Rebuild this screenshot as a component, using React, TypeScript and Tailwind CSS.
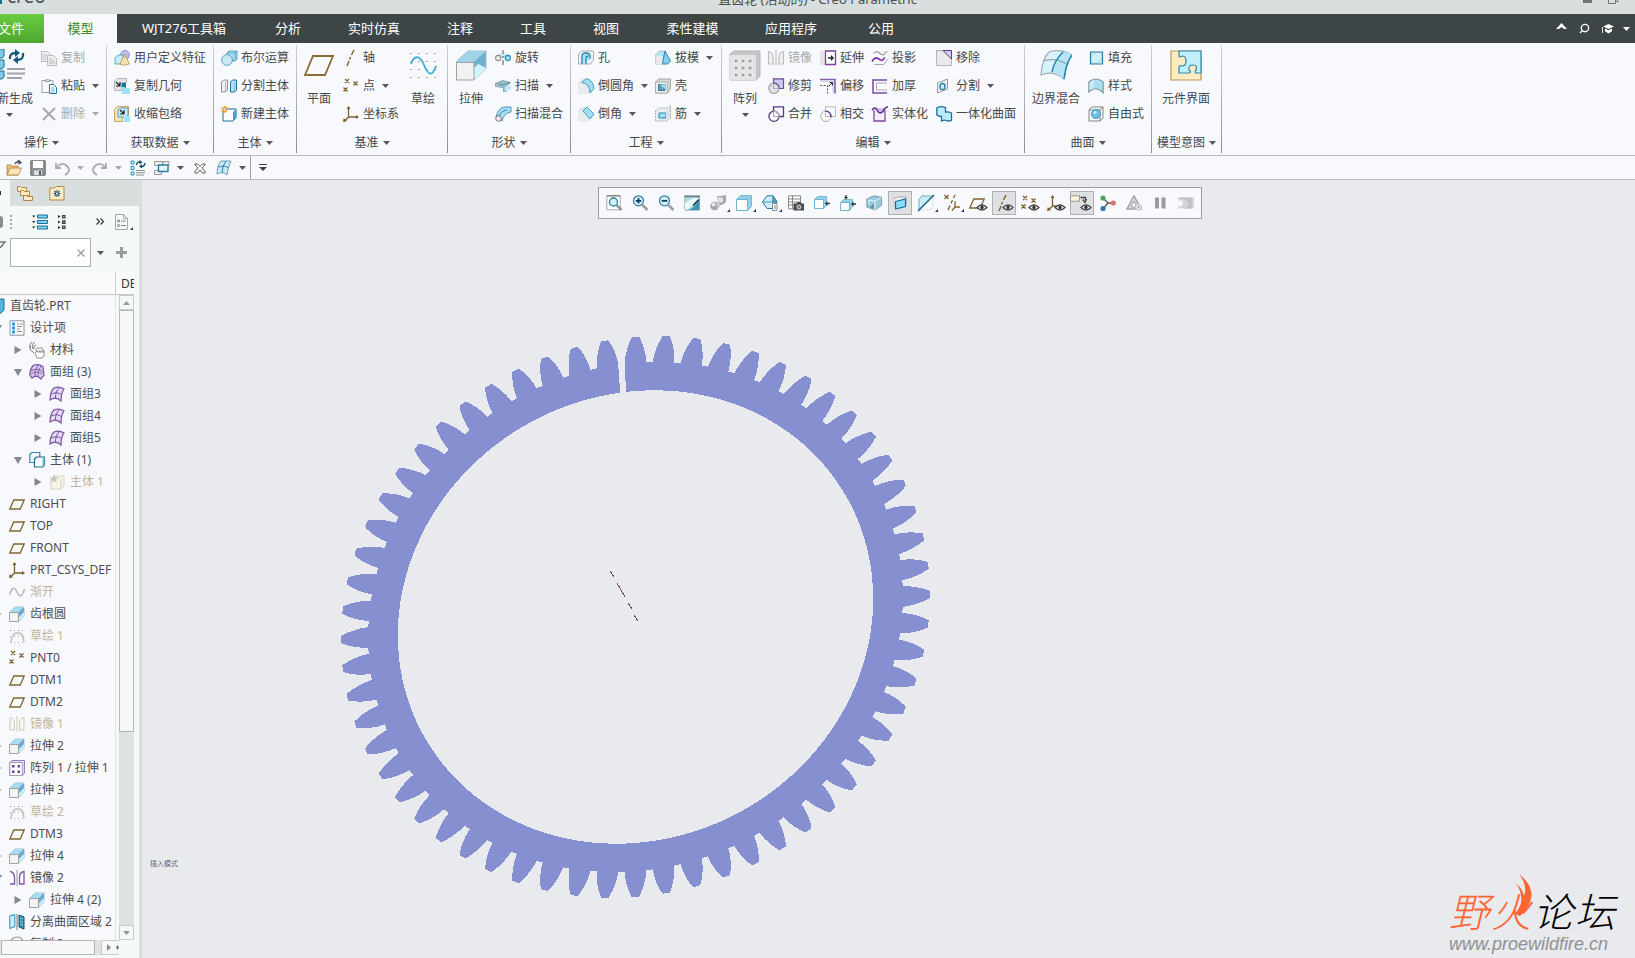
import React from 'react';
import { Search } from 'lucide-react';

const ICONS: Record<string, React.ReactNode> = {
  extrude: (
    <>
      <path d="M1 6L6 1h9v9l-5 5z" fill="#79b8d4" stroke="#8fb4c4" strokeWidth=".8" />
      <path d="M1 6L6 1h9l-5 5z" fill="#a9dcf0" />
      <path d="M10 15v-5l5-5v5z" fill="#c9effc" />
      <path d="M10 6l5-5v5l-5 5z" fill="#6cacc9" />
      <path d="M.5 6.500h9v9h-9z" fill="#f3f3f3" stroke="#a2a4a6" />
    </>
  ),
  copy: (
    <g fill="#eeefef" stroke="#b9bbbc">
      <path d="M.5 1.500h6l3 3v7h-9z" />
      <path d="M2 5h4M2 7h3M2 9h3" />
      <path d="M6.500 5.500h6l3 3v7h-9z" />
      <path d="M8 9h3M8 11h6M8 13h6" />
    </g>
  ),
  paste: (
    <>
      <path d="M1 2.500h11v12H1z" fill="#fbfbfb" stroke="#a0a3a5" />
      <path d="M4 3.500V2h1.500q1-2 2 0H9v1.500z" fill="#ddd" stroke="#8b8e90" strokeWidth=".8" />
      <path d="M8.500 6.500h4l3 3v6h-7z" fill="#fff" stroke="#20799f" />
      <path d="M10 10h3M10 12h4M10 14h4" stroke="#3aa4d0" strokeWidth=".8" />
    </>
  ),
  del: <path d="M2 2l12 12M14 2L2 14" stroke="#a9abac" strokeWidth="2.200" fill="none" />,
  udf: (
    <>
      <circle cx="11" cy="5" r="4.500" fill="#b9bdf0" stroke="#7f86c4" strokeWidth=".8" />
      <path d="M1 8l3-3h5v6l-2 3H1z" fill="#c9ecf9" stroke="#4a9cc0" strokeWidth=".8" />
      <path d="M10.500 4.500L6 14q4.500 2.500 9.500 0z" fill="#f5dfae" stroke="#b98f49" strokeWidth=".8" />
    </>
  ),
  copyGeom: (
    <>
      <path d="M.5 3l3-2.500h9v4h-5v8h-7z" fill="#e4e5e6" stroke="#a5a7a9" strokeWidth=".8" />
      <path d="M2 4l4 4M6 4v4H2" stroke="#222" strokeWidth="1.200" fill="none" />
      <path d="M8 5h4v5H8z" fill="#16789f" />
      <path d="M8 9h3v1h5v6H8z" fill="#9de1fb" />
    </>
  ),
  shrink: (
    <>
      <path d="M.5 3.500l3-3h11v9h-6v6h-8z" fill="#f5e2b6" stroke="#b8924f" strokeWidth=".8" />
      <path d="M4 4l2-2h8v7l-2 2H4z" fill="#c8ecfa" stroke="#3b8db1" strokeWidth=".8" />
      <path d="M6 4l4 4M10 4v4H6" stroke="#222" strokeWidth="1.200" fill="none" />
      <path d="M10 10h6v6h-6z" fill="#9de1fb" />
    </>
  ),
  boolean: (
    <>
      <path d="M6 3l2-2h8v8l-2 2H6z" fill="#a6dcf2" stroke="#3f93b8" strokeWidth=".8" />
      <path d="M6 3h8v8M14 3l2-2" stroke="#3f93b8" strokeWidth=".6" fill="none" />
      <circle cx="6" cy="10" r="5.400" fill="#c8e8f4" stroke="#3f93b8" strokeWidth=".8" />
    </>
  ),
  splitBody: (
    <>
      <path d="M.5 4l2-2h4v10l-2 2h-4z" fill="#eef0f1" stroke="#8b9092" />
      <path d="M9.500 4l2-2h4v10l-2 2h-4z" fill="#b2e5f9" stroke="#1a6f95" />
      <path d="M4.500 4v10M13.500 4v10" stroke="#6b98ab" strokeWidth=".6" />
    </>
  ),
  newBody: (
    <>
      <path d="M2 6l3-3h10v9l-3 3H2z" fill="#fff" stroke="#1a6f95" />
      <path d="M12 6l3-3v9l-3 3z" fill="#4aa3c8" />
      <path d="M3.500 0v7M0 3.500h7M1 1l5 5M6 1L1 6" stroke="#e99a2b" strokeWidth="1.200" />
      <circle cx="3.500" cy="3.500" r="1" fill="#fff" />
    </>
  ),
  axis: <path d="M11 0L8.500 5M7.500 7L6.500 9.500M6 11L4 16" stroke="#7d6128" strokeWidth="1.400" fill="none" />,
  points: (
    <path
      d="M2 1l4 4M6 1L2 5M10.500 3.500l4 4M14.500 3.500l-4 4M.5 9.500l4 4M4.500 9.500l-4 4"
      stroke="#7d6128"
      strokeWidth="1.300"
      fill="none"
    />
  ),
  csys: (
    <>
      <path d="M5.500 1.500v9.500h9M5.500 11l-4 4" stroke="#7d5f28" strokeWidth="1.300" fill="none" />
      <path d="M5.500 0l2 3h-4zM16 11l-3-2v4zM0 16l.8-4 3.200 3.200z" fill="#7d5f28" />
    </>
  ),
  revolve: (
    <>
      <path d="M1 5q7-4 14 0l-1 3H2z" fill="#ccecf7" />
      <circle cx="3.200" cy="8" r="2.600" fill="#eee" stroke="#8d9092" strokeWidth="1.100" />
      <circle cx="12.800" cy="8" r="2.600" fill="#9edcf3" stroke="#2c8bb2" strokeWidth="1.100" />
      <path d="M8 0v4M8 6v2M8 10v5" stroke="#555" strokeWidth="1" />
    </>
  ),
  sweep: (
    <>
      <path d="M.5 5.500l7-3 8 2-4 3v6l-3 0V9.500l-8-1z" fill="#8ec4d6" stroke="#7f9299" strokeWidth=".8" />
      <path d="M.5 5.500l7 1.500 8-2.500" stroke="#678" strokeWidth=".8" fill="none" />
      <path d="M10 8.500l6-1v4l-6 2z" fill="#bde8f7" />
      <path d="M.5 5.500h3v4l-3-1z" fill="#b8babb" />
    </>
  ),
  sweptBlend: (
    <>
      <path d="M1 12Q2 3 9 1h7v5Q9 7 7 15z" fill="#a6dff4" stroke="#4a8aa6" strokeWidth=".9" />
      <path d="M4 11Q5 5 12 4" stroke="#2c7ea3" strokeWidth=".9" fill="none" />
      <circle cx="3.500" cy="12.500" r="2.800" fill="#eee" stroke="#777" />
    </>
  ),
  hole: (
    <>
      <path d="M.5 4l3-3h12v9l-3 4H.5z" fill="#eef0f1" stroke="#9a9d9f" strokeWidth=".8" />
      <path d="M4 14V6q0-3 4-3t4 3v3M8 14V8q0-2 2.500-2" stroke="#2589b5" strokeWidth="1.300" fill="#a8e2f8" />
    </>
  ),
  round: (
    <>
      <path d="M0 5h7q5 2 5 6v5H0z" fill="#e9eaeb" />
      <path d="M0 5l4-4h5L5 5z" fill="#dfe1e2" />
      <path d="M4 4.500L8 .5q7 1 8 10L12 15Q12 6 4 4.500z" fill="#9fdcf3" stroke="#3c95bb" strokeWidth=".9" />
    </>
  ),
  chamfer: (
    <>
      <path d="M0 5h6l6 6v5H0z" fill="#e9eaeb" />
      <path d="M0 5l4-4h6L6 5z" fill="#dfe1e2" />
      <path d="M5 5l4-4 7 7-4 5z" fill="#9fe0f8" stroke="#3c95bb" strokeWidth=".9" />
    </>
  ),
  draft: (
    <>
      <path d="M.5 5l4-4h6l-2 4v9h-8z" fill="#b6e4f4" stroke="#9ab6c0" strokeWidth=".8" />
      <path d="M.5 6h7v8h-7z" fill="#e9eaeb" />
      <path d="M10 1l5.500 10-3 3H7.500z" fill="#86d0ee" stroke="#2d86ad" />
    </>
  ),
  shell: (
    <>
      <path d="M.5 4l3-3h12v10l-3 4H.5z" fill="#d4d7d8" stroke="#999" strokeWidth=".8" />
      <path d="M.5 4h12v11H.5z" fill="#eceded" stroke="#a3a6a8" strokeWidth=".8" />
      <path d="M3.500 6.500h6.500v6H3.500z" fill="#5d9fbb" stroke="#3b7e9b" />
      <path d="M5 6.500h5V11z" fill="#a6e3fa" />
    </>
  ),
  rib: (
    <>
      <path d="M.5 5l3-3h8l4-2v12l-3 3H.5z" fill="#e6eef1" stroke="#999" strokeWidth=".8" strokeDasharray="2 1" />
      <path d="M4 7h7v5H4z" fill="#9fe0f8" stroke="#2d86ad" />
      <path d="M11 5l4-4v10l-4 3z" fill="#dfe1e2" />
    </>
  ),
  mirrorGrey: (
    <path
      d="M.5 1.500Q5 2 5 8v6H.5zM15.500 1.500Q11 2 11 8v6h4.500zM8 0v16"
      stroke="#b9bbbd"
      strokeWidth="1.100"
      fill="#f1f1f2"
    />
  ),
  mirrorTan: (
    <path d="M1 1.500Q5.500 2 5.500 8v6H1zM15 1.500Q10.500 2 10.500 8v6H15zM8 0v16" stroke="#cfc9bb" fill="#faf8f0" />
  ),
  mirrorPurple: (
    <>
      <path d="M1 1.500Q5.500 2 5.500 8v6H1M15 1.500Q10.500 2 10.500 8v6H15z" stroke="#8552a8" strokeWidth="1.300" fill="#fff" />
      <path d="M8 0v16" stroke="#999" />
    </>
  ),
  trim: (
    <>
      <path d="M5.500 .8h10v9.700h-10z" fill="#cbc9f2" stroke="#6a4d93" strokeWidth="1.200" />
      <circle cx="6" cy="10.300" r="5.200" fill="#dfe0e4" stroke="#999" strokeWidth="1.100" />
      <path d="M5.500 5V10.500h5.700" stroke="#b5a8c8" fill="none" />
      <path d="M5.500 5.100q5 0 5.700 5.400" stroke="#7a4fa2" strokeWidth="1.200" fill="none" />
    </>
  ),
  merge: (
    <>
      <path d="M5.500 5V.8h10v9.700h-4" fill="none" stroke="#573a7d" strokeWidth="1.300" />
      <circle cx="6" cy="10.300" r="5.100" fill="none" stroke="#573a7d" strokeWidth="1.300" />
      <path d="M5.500 5.500v5H11" stroke="#aaa" fill="none" />
      <path d="M6 5.200q5 .4 5.100 5" stroke="#bbb" strokeWidth="1.300" fill="none" />
    </>
  ),
  extend: (
    <>
      <path d="M0 1h6v14H0z" fill="#e3e4e5" />
      <path d="M5.500 1h10v13.500h-10z" fill="#fff" stroke="#7a3fa0" strokeWidth="1.300" />
      <path d="M8 8h4" stroke="#222" strokeWidth="1.500" />
      <path d="M11 5l3 3-3 3z" fill="#222" />
    </>
  ),
  offset: (
    <>
      <path d="M0 1.500h15v14" fill="none" stroke="#8461aa" strokeWidth="1.600" />
      <path d="M0 3.200h13.200v12" fill="none" stroke="#d9cfe8" strokeWidth="1.600" />
      <path d="M0 7.500h7.500v8" fill="none" stroke="#555" strokeDasharray="2 1.500" />
      <path d="M8.500 8.500l4-4M9.500 4.500h3v3" stroke="#333" fill="none" />
    </>
  ),
  intersect: (
    <>
      <path d="M5.500 .8h10v9.700h-10z" fill="none" stroke="#b8babc" />
      <circle cx="6" cy="10.300" r="5.200" fill="none" stroke="#a8aaac" />
      <path d="M5.500 5.100q5 0 5.700 6" stroke="#6b2f92" strokeWidth="1.400" fill="none" />
    </>
  ),
  project: (
    <>
      <path d="M1.500 3.500q3-3 5-1t5 2.500q1-3 4-3.500" fill="none" stroke="#9a9d9f" strokeWidth="1.100" />
      <path d="M0 11.500q3-5 6-3t4 2l3-3" fill="none" stroke="#7a2fa8" strokeWidth="1.700" />
      <path d="M2 14.500h10l3.500-5.500" fill="none" stroke="#aaa" />
    </>
  ),
  thicken: (
    <>
      <path d="M15 2H1v13h14" fill="none" stroke="#7a4aa0" strokeWidth="1.500" />
      <path d="M15 5H4.500v7H15" fill="none" stroke="#aaa" />
    </>
  ),
  solidify: (
    <>
      <path d="M2 4v11h11V4" fill="#f2eff8" stroke="#7a4aa0" strokeWidth="1.300" />
      <path d="M4 2h8v3q-3 4-6 1z" fill="#cdc1ec" />
      <path d="M0 4q3-4 5 0 3 6 7 0 1-3 4-3" fill="none" stroke="#652c8f" strokeWidth="1.600" />
    </>
  ),
  remove: (
    <>
      <path d="M.5 .5h15v15H.5z" fill="#e9eaeb" stroke="#b3b3b5" />
      <path d="M7 .5h8.500V9z" fill="#d5cdf5" stroke="#5e3a87" />
    </>
  ),
  splitSurf: (
    <>
      <path d="M1.500 5l10-4v10l-10 4z" fill="#eceded" stroke="#999" />
      <ellipse cx="6.500" cy="8.500" rx="2.500" ry="3.200" fill="#cdeffc" stroke="#1d7da5" strokeWidth="1.300" />
    </>
  ),
  unify: (
    <path
      d="M.8 2Q5-.5 9.500 1.500v4.500q3-.5 6 1v7.500q-3 1-5 0-2-1-5 .5V10.500q-3 0-4.700-1.500z"
      fill="#bdeafb"
      stroke="#1a6f95"
      strokeWidth="1.300"
    />
  ),
  fill: (
    <>
      <path d="M2.500 2h12v12h-12z" fill="#bfeafa" stroke="#2b7ba0" strokeWidth="1.200" />
      <path d="M4 9l5-5M4 12l8-8M7 12l6-6" stroke="#fff" />
    </>
  ),
  style: (
    <>
      <path d="M6 1.500Q11 .5 15.200 4v11Q11 10 6 10z" fill="#8fd3ec" />
      <path d="M.8 4Q8-2 15.200 4v11Q8 7 .8 14z" fill="#b5e6f7" fillOpacity=".7" stroke="#7f969f" strokeWidth="1.100" />
    </>
  ),
  freestyle: (
    <>
      <path d="M1 4l3-3h11v11l-3 3H1zM1 4h11v11M12 4l3-3" fill="none" stroke="#777" strokeWidth=".9" />
      <circle cx="8" cy="8" r="4.600" fill="#6fbfe0" stroke="#2d86ad" strokeWidth=".7" />
      <circle cx="7" cy="6.500" r="1.600" fill="#cdeffc" />
    </>
  ),
  open: (
    <>
      <path d="M1 5h4l1 1h6v9H1z" fill="#eac27c" stroke="#b08138" strokeWidth=".8" />
      <path d="M1 15l3-7h11.500l-3 7z" fill="#fbe5b7" stroke="#b08138" strokeWidth=".8" />
      <path d="M9 4q1-3 5-2M12 0l3 2.500L12 4" stroke="#444" strokeWidth="1.300" fill="none" />
    </>
  ),
  save: (
    <>
      <path d="M.8 .8h14.400v14.400H.8z" fill="#909396" stroke="#66686a" />
      <path d="M3 1h10v7H3z" fill="#fff" />
      <path d="M4 10.500h8V15H4z" fill="#cfe3ea" />
      <path d="M9 11h2v4H9z" fill="#505a5e" />
    </>
  ),
  undo: <path d="M2 3v5h5M2.500 7.500Q8 1 13 6t-2 9" stroke="#a9abad" strokeWidth="1.800" fill="none" />,
  redo: <path d="M14 3v5H9M13.500 7.500Q8 1 3 6t2 9" stroke="#a9abad" strokeWidth="1.800" fill="none" />,
  regen: (
    <>
      <path d="M1 1h3v3H1zM1 6.500h3v3H1zM1 12h3v3H1z" fill="#cdeffc" stroke="#3797bd" />
      <path d="M6 10.500h9M6 12.700h9M6 15h8" stroke="#8b8e90" />
      <path d="M6.500 5Q7 1.500 10 2M15 3q-.5 4-4 3.500" stroke="#14506d" strokeWidth="1.400" fill="none" />
      <path d="M9.500 0l3 2-3 2.500zM12 4l-3 2.500 3 2z" fill="#14506d" />
    </>
  ),
  windows: (
    <>
      <path d="M.5 1.500h8v4h-8zM.5 10.500h7v4h-7zM9 1.500h6v4H9z" fill="#eee" stroke="#999" />
      <path d="M4.500 5h9.500v6.500H4.500z" fill="#e4f5fb" stroke="#2c7ea3" strokeWidth="1.400" />
    </>
  ),
  closeWin: (
    <path
      d="M3 4h2.500L8 6.500 10.500 4H13v1L10 8l3 3.500V13h-2.500L8 10l-2.500 3H3v-1.500L6 8 3 5z"
      fill="#fff"
      stroke="#555"
    />
  ),
  surface: (
    <>
      <path d="M1 14Q1 5 5 1h10q-3 6-4 14-4-4-10-1z" fill="#c3ebfa" stroke="#7f9daa" />
      <path d="M2.500 7Q9 5 13 8M10 1Q6 6 6 13" stroke="#2c7ea3" fill="none" />
    </>
  ),
  quilt: (
    <>
      <path d="M1 14Q1 6 5 2q5-2 10 1-3 4-3 12-5-5-11-1z" fill="#e3d9f6" stroke="#7b53a2" strokeWidth="1.200" />
      <path d="M2.500 8Q8 5 13 9M10 2Q6 6 6.500 13" stroke="#7b53a2" fill="none" />
    </>
  ),
  quilts: (
    <>
      <path d="M.8 11Q1 4 5 1q5-1 9 1.500l1 9q-2 1-3 3.500-5-5-9-1z" fill="#d9ccf0" stroke="#7b53a2" strokeWidth="1.200" />
      <path d="M2 7Q8 3 14 8M9 1Q5 6 6 13M12 2Q8 7 9 13M2 10q6-4 11 0" stroke="#7b53a2" fill="none" strokeWidth=".9" />
    </>
  ),
  design: (
    <>
      <path d="M1 .8h14v14.400H1z" fill="#fff" stroke="#8c9092" />
      <path d="M3 2.500h3v3H3zM3 6.500h3v3H3zM3 10.500h3v3H3z" fill="#2c9bc9" />
      <path d="M8 4h2M11 4h3M8 6.500h5M8 9h3M8 11.500h5" stroke="#8c9092" />
    </>
  ),
  material: (
    <>
      <path d="M3 0q-3 2-2 6M5.500 0Q2 3 4 7M1 4q-1 4 4 7M7 3q-3 1-2 4" stroke="#777" fill="none" />
      <path d="M8 6h5l1.500 2v2h-6l-2-2zM6 11l2-2h7v5l-2 2H8z" fill="#fff" stroke="#8a8d8f" />
    </>
  ),
  bodies: (
    <>
      <path d="M.8 2.500l2-2h8v8l-2 2h-8z" fill="#f2fbfe" stroke="#2c8bb2" strokeWidth="1.200" />
      <path d="M5.500 7l2-2h8v8l-2 2h-8z" fill="#fff" stroke="#1b6c90" strokeWidth="1.200" />
      <path d="M13.500 7l2-2v8l-2 2z" fill="#6dbfe0" />
    </>
  ),
  bodyTan: (
    <>
      <path d="M2 5l3-3h10v10l-3 3H2zM12 5v10" fill="#f7f4ea" stroke="#d5d0c3" />
      <path d="M5 0l1.300 3.500H10L7 5.700 8 9 5 7 2 9l1-3.300L0 3.500h3.700z" fill="#c9c6bc" />
    </>
  ),
  plane: <path d="M.8 13L4.800 4h10.400l-4 9z" stroke="#80642e" strokeWidth="1.300" fill="none" />,
  curveGrey: <path d="M.5 11Q4-1 8 8t7.500-3" stroke="#b4b6b8" strokeWidth="1.400" fill="none" />,
  sketchTan: (
    <>
      <path d="M2 14q1-9 6.500-9T14 10l1 4" stroke="#c9cac8" strokeWidth="1.800" fill="none" />
      <path d="M1 2.500h15M1 8.500h15M1 14.500h15" stroke="#b5b19f" strokeDasharray="1 3" />
    </>
  ),
  pattern: (
    <>
      <path d="M.8 2.500l2-2h12.700V13l-2 2.500H.8z" fill="#ded8f0" stroke="#9680b5" />
      <path d="M.8 2.500h12.500v13H.8z" fill="#fff" stroke="#a79bb8" />
      <path d="M3 5h2.500v2.500H3zM8.500 5H11v2.500H8.500zM3 10.500h2.500V13H3zM8.500 10.500H11V13H8.500z" fill="#6f4799" />
    </>
  ),
  splitArea: (
    <>
      <path d="M.8 2l5-1.500v12l-5 2z" fill="#c9effb" stroke="#2d86ad" />
      <path d="M8 0v16" stroke="#777" />
      <path d="M10 1l5 2v12l-5-2z" fill="#3795bb" stroke="#174f69" />
      <path d="M11 4l3 1M11 7l3 1M11 10l3 1" stroke="#c9effb" strokeDasharray="1 1" />
    </>
  ),
  copied: <path d="M1 8Q2 1 8 1t6 6v8H2z" fill="#f3f3f3" stroke="#999" strokeWidth="1.200" />,
  part: <path d="M1 4l3-3h11v11l-3 3H1z" fill="#52b4dc" stroke="#1b6c90" />,
  folders: (
    <g fill="#fdebc4" stroke="#b08a45" strokeWidth="1">
      <path d="M.5 1.500h3l1 1h5v4h-9z" />
      <path d="M3.500 5.500h3l1 1h5v4h-9z" />
      <path d="M6.500 10.500h3l1 1h5v4h-9z" />
    </g>
  ),
  favorites: (
    <>
      <path d="M.8 3h5l1.500-1.500H15V15H.8z" fill="#fdebc4" stroke="#b08a45" />
      <path d="M8 5v7M4.500 8.500h7M5.500 6l5 5M10.500 6l-5 5" stroke="#185a7a" strokeWidth="1.100" />
      <circle cx="8" cy="8.500" r="1" fill="#fff" />
    </>
  ),
  listTree: (
    <>
      <path d="M5.500 1h10v3h-10zM5.500 6.500h10v3h-10zM5.500 12h10v3h-10z" fill="#7fd4f5" stroke="#1c6e93" />
      <path d="M0 1.500h3.500L1.700 3.500zM0 7h3.500L1.700 9zM0 12.500h3.500l-1.800 2z" fill="#333" />
    </>
  ),
  nodeTree: (
    <>
      <path d="M6.500 1.500h2.500v2.500H6.500zM6.500 6.800h2.500v2.500H6.500zM6.500 12h2.500v2.500H6.500z" fill="#aaa" stroke="#444" strokeWidth="1.200" />
      <path d="M2 1l2.500 1.500L2 4zM2 6.500L4.500 8 2 9.500zM2 12l2.500 1.500L2 15z" fill="#222" />
    </>
  ),
  docSettings: (
    <>
      <path d="M1.500 .5h8l4 4v11h-12z" fill="#f8fafb" stroke="#a1a8ab" />
      <path d="M9.500 .5v4h4" fill="none" stroke="#a1a8ab" />
      <circle cx="4.500" cy="7" r="1.100" fill="none" stroke="#777" />
      <circle cx="4.500" cy="11.500" r="1.100" fill="none" stroke="#777" />
      <path d="M7 7h5M7 11.500h5" stroke="#888" />
    </>
  ),
  zoomFit: (
    <>
      <path d="M.8 .8h13.500v14H.8z" fill="#fff" stroke="#a5a8aa" />
      <path d="M.8 .8h13.500" stroke="#777" strokeWidth="1.200" />
      <circle cx="7.500" cy="7" r="4" fill="#d7f1fb" stroke="#2c7ea3" strokeWidth="1.300" />
      <path d="M10.500 10l5 5" stroke="#8d9092" strokeWidth="2.400" />
    </>
  ),
  zoomIn: (
    <>
      <circle cx="6.500" cy="5.800" r="5" fill="#d7f1fb" stroke="#2c7ea3" strokeWidth="1.200" />
      <path d="M6.500 3v5.600M3.700 5.800h5.600" stroke="#123f57" strokeWidth="1.800" />
      <path d="M10.300 9.800l5.200 5.200" stroke="#9a9c9e" strokeWidth="2.600" />
    </>
  ),
  zoomOut: (
    <>
      <circle cx="6.500" cy="5.800" r="5" fill="#d7f1fb" stroke="#2c7ea3" strokeWidth="1.200" />
      <path d="M3.700 5.800h5.600" stroke="#123f57" strokeWidth="1.800" />
      <path d="M10.300 9.800l5.200 5.200" stroke="#9a9c9e" strokeWidth="2.600" />
    </>
  ),
  repaint: (
    <>
      <path d="M.8 .8h14.700v14.400H.8z" fill="#a9d9ea" stroke="#a5b3b8" />
      <path d="M15.500 5v10H4q5-1 7-5z" fill="#3f93b5" />
      <path d="M1 15V8l8-5h6q-4 3-6 6-3 5-8 6z" fill="#eef8fb" />
      <path d="M.3 1.500h15.500" stroke="#777f83" strokeWidth="1.600" />
      <path d="M15 4.500L9 10.500" stroke="#123" strokeWidth="1.100" />
    </>
  ),
  render: (
    <>
      <path d="M7 3q0-3 4-2l5-1v7q-3 4-7 3z" fill="#a5a7a9" />
      <path d="M8 2l5 1v4L8 8z" fill="#e2e3e4" />
      <circle cx="4.500" cy="11" r="4.300" fill="#a3a5a7" />
      <circle cx="3.500" cy="9.500" r="2" fill="#e8e9ea" />
      <path d="M6 8l4-2v5l-3 2z" fill="#c4c6c7" />
    </>
  ),
  shaded: (
    <>
      <path d="M.5 4.500l4-4h11v11l-4 4H.5z" fill="#8fd0ea" stroke="#7fb7cd" />
      <path d="M.5 4.500h11v11H.5z" fill="#fff" stroke="#6fb4d0" />
    </>
  ),
  views: (
    <>
      <path d="M.5 7L5 .8h6L15 7l-4 6.500H5z" fill="#cdeefa" stroke="#2c7ea3" />
      <path d="M11 .8L15 7h-4.500zM.5 7h14.500" fill="#62abc9" stroke="#2c7ea3" strokeWidth=".8" />
      <path d="M10.500 8.500h4.500v7h-4.500z" fill="#fff" stroke="#888" />
      <path d="M12 11h2M12 13h2" stroke="#888" />
    </>
  ),
  snapshot: (
    <>
      <path d="M.5 .8h12v13H.5zM.5 4h12M.5 7h12M.5 10h12M4.500 .8v13" fill="#fff" stroke="#888" />
      <path d="M5.500 8.500h3l1-1.500h3l1 1.500H16v7H5.500z" fill="#4a4c4e" />
      <circle cx="11" cy="12" r="2" fill="#777" stroke="#ddd" />
    </>
  ),
  boxLeft: (
    <>
      <path d="M.5 4.500l3-3h9v9l-3 3h-9z" fill="#8fd0ea" stroke="#7fb7cd" />
      <path d="M.5 4.500h9v9h-9z" fill="#fff" stroke="#6fb4d0" />
      <path d="M16 8.500h-3" stroke="#333" strokeWidth="1.300" />
      <path d="M13.500 6l-2.500 2.500 2.500 2.500z" fill="#333" />
    </>
  ),
  boxDown: (
    <>
      <path d="M.5 7.500l3-3h9v7l-3 4h-9z" fill="#8fd0ea" stroke="#7fb7cd" />
      <path d="M.5 7.500h9v8h-9z" fill="#fff" stroke="#6fb4d0" />
      <path d="M16 9h-3M6 0v3" stroke="#333" strokeWidth="1.300" />
      <path d="M13.500 6.500L11 9l2.500 2.500zM4 2h4L6 4.500z" fill="#333" />
    </>
  ),
  perspective: (
    <>
      <path d="M.8 4L8 .8l7.500 1.500v8L9 15 .8 12z" fill="#9cc9da" stroke="#7ea0ad" />
      <path d="M3 9V5l6 1 6-3M9 6v9M3 12l5-4" stroke="#e2f5fb" fill="none" />
      <path d="M3 12l5-4v6z" fill="#5f98ae" />
    </>
  ),
  section: (
    <>
      <path d="M1 4l4-2h9v7l-4 2" fill="#eee" stroke="#999" strokeWidth=".8" />
      <path d="M3.500 6.500l10-2.500v7.500l-10 2.500z" fill="#8cdcf7" stroke="#1c6e93" strokeWidth="1.200" />
      <path d="M1 4v7l2 2V6z" fill="#d3d5d6" />
    </>
  ),
  hidden: (
    <>
      <path d="M1 4l3-3h11v11l-3 3H1z" fill="#f4f9fb" stroke="#aab" strokeWidth=".8" strokeDasharray="1 1.500" />
      <path d="M1 15V4l3-3h11z" fill="#c9edf9" stroke="#57a3c3" strokeWidth=".8" />
      <path d="M0 16L16 0" stroke="#135f86" strokeWidth="1.400" />
    </>
  ),
  datumFilter: (
    <path
      d="M.5 0l4 4M4.500 0l-4 4M11 0L9.500 3M8.500 5L7 8.500M6 10.500L4 15M11 6v6h5M11 12l-3 3.500"
      stroke="#80642e"
      strokeWidth="1.300"
      fill="none"
    />
  ),
  note: (
    <>
      <path d="M-2.500 .8h9v5.500h-9z" fill="#fdf3d8" stroke="#999" />
      <path d="M7.500 2.500h5V5M9.800 4.500L12 7.500 13.500 4" stroke="#444" strokeWidth="1.300" fill="none" />
    </>
  ),
  relations: (
    <>
      <path d="M3 3l5 5-5 6M8 8h5" stroke="#555" strokeWidth="1.300" fill="none" />
      <circle cx="3" cy="3" r="2.600" fill="#4f9f63" />
      <circle cx="13.300" cy="8" r="2.600" fill="#e2716b" />
      <circle cx="3" cy="13.500" r="2.600" fill="#2d79a8" />
    </>
  ),
  simulate: (
    <>
      <path d="M8 1l7 13H1z" fill="#e4e5e6" stroke="#a5a7a9" strokeWidth="1.600" />
      <path d="M8 6l3 6H5z" fill="#fff" stroke="#999" />
      <circle cx="12.500" cy="12" r="3" fill="#f0f0f1" stroke="#bbb" />
      <path d="M11.700 10.500l2.300 1.500-2.300 1.500z" fill="#999" />
    </>
  ),
  pause: <path d="M3 2.500h4v11H3zM9.500 2.500h4v11h-4z" fill="#999b9d" />,
  stop: (
    <>
      <path d="M0 2.500h16v11H0z" fill="#d3d5d6" />
      <path d="M2 2.500h12v11H6q5-2 4-6T2 4z" fill="#bfc1c3" />
      <path d="M0 5.500q5-1 5 2.500t-5 3.500z" fill="#f8f9fc" />
    </>
  ),
};

// the eye overlaid on datum display toggles
const Eye = () => (
  <>
    <path d="M7 12.500q5-5 10 0-5 5-10 0z" fill="#f8f9fc" stroke="#444" strokeWidth="1.300" />
    <circle cx="12" cy="12.500" r="1.700" fill="#333" />
  </>
);

const Icon: React.FC<{ name: string; eye?: boolean }> = ({ name, eye }) => (
  <svg viewBox="0 0 16 16" className="w-4 h-4 shrink-0 overflow-visible" aria-hidden="true">
    {eye ? <g transform="translate(-1 0)">{ICONS[name]}</g> : ICONS[name]}
    {eye && <Eye />}
  </svg>
);

const Caret: React.FC<{ muted?: boolean }> = ({ muted }) => (
  <svg viewBox="0 0 7 4" className={`w-[7px] h-1 shrink-0 ${muted ? 'fill-[#a9abad]' : 'fill-[#55585a]'}`} aria-hidden="true">
    <path d="M0 0h7L3.500 4z" />
  </svg>
);

type ToolItem = { icon: string; label: string; caret?: boolean; muted?: boolean };

const ToolColumn: React.FC<{ items: ToolItem[] }> = ({ items }) => (
  <div className="flex flex-col items-start">
    {items.map((item) => (
      <button
        key={item.label}
        type="button"
        className={`h-7 flex items-center gap-1 whitespace-nowrap ${item.muted ? 'text-[#a6a9ab]' : 'text-[#444749]'}`}
      >
        <Icon name={item.icon} />
        <span>{item.label}</span>
        {item.caret && (
          <span className="pl-[3px] flex">
            <Caret muted={item.muted} />
          </span>
        )}
      </button>
    ))}
  </div>
);

const BigTool: React.FC<{ label: string; caret?: boolean; children: React.ReactNode }> = ({ label, caret, children }) => (
  <button type="button" className="h-[84px] min-w-[30px] flex flex-col items-center pt-[5px] whitespace-nowrap">
    <svg viewBox="0 0 32 32" className="w-8 h-8 -mx-px shrink-0" aria-hidden="true">
      {children}
    </svg>
    <span className="h-5 mt-2 leading-5 flex items-center">{label}</span>
    {caret && (
      <span className="pt-1 flex">
        <Caret />
      </span>
    )}
  </button>
);

const Group: React.FC<{ label: string; className: string; children: React.ReactNode }> = ({ label, className, children }) => (
  <section className={`flex shrink-0 ${className}`}>
    <div className="flex-1 flex flex-col min-w-0">
      <div className="flex pt-px">{children}</div>
      <button type="button" className="h-[27px] pt-0.5 flex items-center justify-center gap-1 whitespace-nowrap">
        {label}
        <Caret />
      </button>
    </div>
    <div className="w-px my-0.5 bg-linear-to-b from-[#cdd1d2] to-[#8d9293]" />
  </section>
);

const TABS = [
  { label: 'WJT276工具箱', width: 'min-w-[134px]' },
  { label: '分析', width: 'min-w-[74px]' },
  { label: '实时仿真', width: 'min-w-[98px]' },
  { label: '注释', width: 'min-w-[74px]' },
  { label: '工具', width: 'min-w-[72px]' },
  { label: '视图', width: 'min-w-[74px]' },
  { label: '柔性建模', width: 'min-w-[99px]' },
  { label: '应用程序', width: 'min-w-[98px]' },
  { label: '公用', width: 'min-w-[82px]' },
];

const TitleBar = () => (
  <header className="h-3.5 shrink-0 bg-[#d9dfde] overflow-hidden flex justify-between text-[13px] text-[#4a4f51]">
    <div className="flex-1 flex pr-4">
      <div className="w-0.5 h-1 bg-[#1d6f9a]" />
      <span className="-mt-4 pl-[5px] text-[19px] leading-6">creo</span>
    </div>
    <span className="-mt-[11px] h-5 leading-5 whitespace-nowrap">直齿轮 (活动的) - Creo Parametric</span>
    <div className="flex-1 flex justify-end gap-4 pr-4">
      <button type="button" aria-label="最小化" className="w-[9px] h-[3px] bg-[#6f7677]" />
      <button type="button" aria-label="还原" className="flex">
        <svg viewBox="0 0 11 4" className="w-[11px] h-1" aria-hidden="true">
          <path d="M.5 0v3.500h7V0M7.500 1.500H10V0" fill="none" stroke="#6f7677" />
        </svg>
      </button>
    </div>
  </header>
);

const TabBar = () => (
  <nav className="h-[29px] shrink-0 bg-[#3e4546] flex text-[13px] text-white">
    <button type="button" className="w-11 pr-5 flex justify-end items-center whitespace-nowrap bg-linear-to-b from-[#68cc40] to-[#4fa630]">
      文件
    </button>
    <button type="button" className="w-[73px] bg-[#f8f9fc] text-[#3e8a1f]">
      模型
    </button>
    {TABS.map((tab) => (
      <button key={tab.label} type="button" className={`${tab.width} whitespace-nowrap`}>
        {tab.label}
      </button>
    ))}
    <div className="ml-auto pr-[5px] flex items-center gap-3">
      <button type="button" aria-label="最小化功能区" className="pb-1">
        <svg viewBox="0 0 11 7" className="w-[11px] h-[7px]" aria-hidden="true">
          <path d="M0 6l5.500-6L11 6H8L5.500 4 3 6z" fill="#fff" />
        </svg>
      </button>
      <button type="button" aria-label="搜索">
        <Search className="w-[11px] h-[11px] -scale-x-100" strokeWidth={3} />
      </button>
      <button type="button" aria-label="学习">
        <svg viewBox="0 0 12 10" className="w-3 h-2.5" aria-hidden="true">
          <path d="M6.500 0L12 2.500 6.500 5 1 2.500zM3 4.500l3.500 1.700L10 4.500v2.700L6.500 9.500 3 7.200z" fill="#fff" />
          <path d="M.5 3v6" stroke="#fff" strokeWidth=".9" fill="none" />
        </svg>
      </button>
      <button type="button" aria-label="更多" className="-ml-[3px]">
        <svg viewBox="0 0 7 4" className="w-[7px] h-1 fill-white" aria-hidden="true">
          <path d="M0 0h7L3.500 4z" />
        </svg>
      </button>
    </div>
  </nav>
);

const Ribbon = () => (
  <div className="shrink-0 flex bg-[#f8f9fc] border-b border-[#b3b9b9] overflow-hidden text-[12px] text-[#444749]">
    <Group label="操作" className="w-[130px] -ml-[23px]">
      <div className="flex gap-2 pl-2">
        <BigTool label="重新生成" caret>
          <path d="M5 2l2-2h4v7l-2 2H5zM5 13l2-2h4v7l-2 2H5zM5 24l2-2h4v6l-2 2H5z" fill="#7cc9e8" stroke="#1b6c90" />
          <path d="M14 20h18M14 24.500h18M14 29h15" stroke="#a1a4a6" strokeWidth="2" />
          <path d="M17 10Q16 4 23 4M30 4q1 7-6 7" stroke="#15597a" strokeWidth="2.300" fill="none" />
          <path d="M22 0l5 4-5 4zM25 7l-5 4 5 4z" fill="#15597a" />
        </BigTool>
        <ToolColumn
          items={[
            { icon: 'copy', label: '复制', muted: true },
            { icon: 'paste', label: '粘贴', caret: true },
            { icon: 'del', label: '删除', caret: true, muted: true },
          ]}
        />
      </div>
    </Group>
    <Group label="获取数据" className="w-[107px]">
      <div className="pl-[7px]">
        <ToolColumn
          items={[
            { icon: 'udf', label: '用户定义特征' },
            { icon: 'copyGeom', label: '复制几何' },
            { icon: 'shrink', label: '收缩包络' },
          ]}
        />
      </div>
    </Group>
    <Group label="主体" className="w-[83px]">
      <div className="pl-[7px]">
        <ToolColumn
          items={[
            { icon: 'boolean', label: '布尔运算' },
            { icon: 'splitBody', label: '分割主体' },
            { icon: 'newBody', label: '新建主体' },
          ]}
        />
      </div>
    </Group>
    <Group label="基准" className="w-[151px]">
      <div className="flex gap-[9px] pl-[7px]">
        <BigTool label="平面">
          <path d="M2 26L10 7h20l-8 19z" stroke="#8b6c33" strokeWidth="1.800" fill="none" />
        </BigTool>
        <ToolColumn
          items={[
            { icon: 'axis', label: '轴' },
            { icon: 'points', label: '点', caret: true },
            { icon: 'csys', label: '坐标系' },
          ]}
        />
        <BigTool label="草绘">
          <path d="M3.500 4.500h26M3.500 12.500h26M3.500 20.500h26M3.500 28.500h26" stroke="#555" strokeDasharray="1 7" />
          <path d="M4 15C8 4 14 8 17 16s8 14 12 1" stroke="#3aaedd" strokeWidth="1.800" fill="none" />
        </BigTool>
      </div>
    </Group>
    <Group label="形状" className="w-[123px]">
      <div className="flex gap-[9px] pl-2">
        <BigTool label="拉伸">
          <path d="M1 13L13 2h18v18L19 31z" fill="#6fb0cc" stroke="#9fb7c0" />
          <path d="M1 13L13 2h18L19 13z" fill="#9fd3e8" />
          <path d="M19 31V19l4-4 8 4v1z" fill="#d4f4fd" />
          <path d="M1.500 13.500h17.500v17.500H1.500z" fill="#f2f2f3" stroke="#9fa1a3" />
        </BigTool>
        <ToolColumn
          items={[
            { icon: 'revolve', label: '旋转' },
            { icon: 'sweep', label: '扫描', caret: true },
            { icon: 'sweptBlend', label: '扫描混合' },
          ]}
        />
      </div>
    </Group>
    <Group label="工程" className="w-[151px]">
      <div className="flex gap-[7px] pl-[7px]">
        <ToolColumn
          items={[
            { icon: 'hole', label: '孔' },
            { icon: 'round', label: '倒圆角', caret: true },
            { icon: 'chamfer', label: '倒角', caret: true },
          ]}
        />
        <ToolColumn
          items={[
            { icon: 'draft', label: '拔模', caret: true },
            { icon: 'shell', label: '壳' },
            { icon: 'rib', label: '筋', caret: true },
          ]}
        />
      </div>
    </Group>
    <Group label="编辑" className="w-[303px]">
      <div className="flex gap-2 pl-2">
        <BigTool label="阵列" caret>
          <path d="M1 5l4-3h26v25l-4 4H1z" fill="#c3c5c7" stroke="#b5b5b5" />
          <path d="M1 6h26v25H1z" fill="#e1e3e4" />
          <path
            d="M5 10h4v4H5zM12 10h4v4h-4zM19 10h4v4h-4zM5 17h4v4H5zM12 17h4v4h-4zM19 17h4v4h-4zM5 24h4v4H5zM12 24h4v4h-4zM19 24h4v4h-4z"
            fill="#a0a2a4"
            stroke="#f3f3f3"
          />
        </BigTool>
        <ToolColumn
          items={[
            { icon: 'mirrorGrey', label: '镜像', muted: true },
            { icon: 'trim', label: '修剪' },
            { icon: 'merge', label: '合并' },
          ]}
        />
        <ToolColumn
          items={[
            { icon: 'extend', label: '延伸' },
            { icon: 'offset', label: '偏移' },
            { icon: 'intersect', label: '相交' },
          ]}
        />
        <ToolColumn
          items={[
            { icon: 'project', label: '投影' },
            { icon: 'thicken', label: '加厚' },
            { icon: 'solidify', label: '实体化' },
          ]}
        />
        <ToolColumn
          items={[
            { icon: 'remove', label: '移除' },
            { icon: 'splitSurf', label: '分割', caret: true },
            { icon: 'unify', label: '一体化曲面' },
          ]}
        />
      </div>
    </Group>
    <Group label="曲面" className="w-[127px]">
      <div className="flex gap-2 pl-[7px]">
        <BigTool label="边界混合">
          <path d="M1 26Q2 10 9 3q12-4 23 3-6 8-8 24-11-9-23-4z" fill="#d6f2fb" stroke="#a5b0b4" strokeWidth="1.300" />
          <path d="M23 3q5 0 9 3-6 8-8 24-6-5-12-7Q14 12 23 3z" fill="#b5e4f5" />
          <path d="M4 12q12-4 24 4" stroke="#9aa5a9" strokeWidth="1.300" fill="none" />
          <path d="M23 3Q14 12 12 23M32 6q-6 8-8 24" stroke="#2584ae" strokeWidth="1.500" fill="none" />
        </BigTool>
        <ToolColumn
          items={[
            { icon: 'fill', label: '填充' },
            { icon: 'style', label: '样式' },
            { icon: 'freestyle', label: '自由式' },
          ]}
        />
      </div>
    </Group>
    <Group label="模型意图" className="w-[70px]">
      <div className="pl-2.5">
        <BigTool label="元件界面">
          <path d="M1 2h30v29H1z" fill="#fdebc4" stroke="#bd9550" strokeWidth="1.200" />
          <path
            d="M9 2h22v22h-5q-2-1 0-3 2-5-3-5t-4 5q3 2 0 3H9v-6q0-2 3-1 4 0 4-5t-4-5q-3 2-3 0z"
            fill="#c5eefc"
            stroke="#2d86ad"
            strokeWidth="1.200"
          />
        </BigTool>
      </div>
    </Group>
  </div>
);

const QuickButton: React.FC<{ icon: string; label: string }> = ({ icon, label }) => (
  <button type="button" aria-label={label}>
    <Icon name={icon} />
  </button>
);

const QuickCaret: React.FC<{ label: string; muted?: boolean }> = ({ label, muted }) => (
  <button type="button" aria-label={label} className="-ml-px">
    <Caret muted={muted} />
  </button>
);

const QuickBar = () => (
  <div className="h-6 shrink-0 bg-[#f8f9fc] border-b border-[#b3b9b9] flex items-center gap-2 pl-1.5">
    <QuickButton icon="open" label="打开" />
    <QuickButton icon="save" label="保存" />
    <QuickButton icon="undo" label="撤消" />
    <QuickCaret label="撤消列表" muted />
    <QuickButton icon="redo" label="重做" />
    <QuickCaret label="重做列表" muted />
    <QuickButton icon="regen" label="重新生成" />
    <QuickButton icon="windows" label="窗口" />
    <QuickCaret label="窗口列表" />
    <QuickButton icon="closeWin" label="关闭" />
    <QuickButton icon="surface" label="曲面" />
    <QuickCaret label="曲面列表" />
    <div className="w-px self-stretch -ml-1 bg-[#9da3a4]" />
    <button type="button" aria-label="自定义快速访问工具栏">
      <svg viewBox="0 0 8 7" className="w-2 h-[7px]" aria-hidden="true">
        <path d="M0 0h8v1H0zM0 3h8L4 7z" fill="#3f4243" />
      </svg>
    </button>
  </div>
);

type TreeNode = { level: number; icon: string; label: string; arrow?: 'open' | 'closed'; muted?: boolean };

const TREE: TreeNode[] = [
  { level: 0, icon: 'part', label: '直齿轮.PRT' },
  { level: 1, icon: 'design', label: '设计项', arrow: 'open' },
  { level: 2, icon: 'material', label: '材料', arrow: 'closed' },
  { level: 2, icon: 'quilts', label: '面组 (3)', arrow: 'open' },
  { level: 3, icon: 'quilt', label: '面组3', arrow: 'closed' },
  { level: 3, icon: 'quilt', label: '面组4', arrow: 'closed' },
  { level: 3, icon: 'quilt', label: '面组5', arrow: 'closed' },
  { level: 2, icon: 'bodies', label: '主体 (1)', arrow: 'open' },
  { level: 3, icon: 'bodyTan', label: '主体 1', arrow: 'closed', muted: true },
  { level: 1, icon: 'plane', label: 'RIGHT' },
  { level: 1, icon: 'plane', label: 'TOP' },
  { level: 1, icon: 'plane', label: 'FRONT' },
  { level: 1, icon: 'csys', label: 'PRT_CSYS_DEF' },
  { level: 1, icon: 'curveGrey', label: '渐开', muted: true },
  { level: 1, icon: 'extrude', label: '齿根圆', arrow: 'closed' },
  { level: 1, icon: 'sketchTan', label: '草绘 1', muted: true },
  { level: 1, icon: 'points', label: 'PNT0' },
  { level: 1, icon: 'plane', label: 'DTM1' },
  { level: 1, icon: 'plane', label: 'DTM2' },
  { level: 1, icon: 'mirrorTan', label: '镜像 1', muted: true },
  { level: 1, icon: 'extrude', label: '拉伸 2', arrow: 'closed' },
  { level: 1, icon: 'pattern', label: '阵列 1 / 拉伸 1', arrow: 'closed' },
  { level: 1, icon: 'extrude', label: '拉伸 3', arrow: 'closed' },
  { level: 1, icon: 'sketchTan', label: '草绘 2', muted: true },
  { level: 1, icon: 'plane', label: 'DTM3' },
  { level: 1, icon: 'extrude', label: '拉伸 4', arrow: 'closed' },
  { level: 1, icon: 'mirrorPurple', label: '镜像 2', arrow: 'open' },
  { level: 2, icon: 'extrude', label: '拉伸 4 (2)', arrow: 'closed' },
  { level: 1, icon: 'splitArea', label: '分离曲面区域 2' },
  { level: 1, icon: 'copied', label: '复制 3' },
];

// the panel is scrolled a little to the right, so the first levels start off its edge
const INDENT = ['-ml-[26px]', '-ml-[6px]', 'ml-[14px]', 'ml-[34px]'];

const ModelTree = () => (
  <ul className="w-[116px] shrink-0 overflow-hidden border-r border-[#e3e6e8] bg-[#f8f9fc] text-[12px]">
    {TREE.map((node, i) => (
      <li key={i} className={INDENT[node.level]}>
        <button
          type="button"
          className={`h-[22px] flex items-center gap-[5px] whitespace-nowrap ${node.muted ? 'text-[#bfb49c]' : 'text-[#4b4e50]'}`}
        >
          <svg viewBox="0 0 8 8" className="w-2 h-2 mr-0.5 shrink-0 fill-[#85888a]" aria-hidden="true">
            {node.arrow === 'open' && <path d="M0 1h8L4 8z" />}
            {node.arrow === 'closed' && <path d="M.5 0L7.500 4l-7 4z" />}
          </svg>
          <Icon name={node.icon} />
          <span>{node.label}</span>
        </button>
      </li>
    ))}
  </ul>
);

const Sidebar = () => (
  <aside className="w-[142px] shrink-0 flex flex-col bg-[#f5faf9] border-r-[3px] border-[#d9dfde]">
    <div className="h-[26px] shrink-0 flex">
      <div className="w-2.5 flex items-center">
        <div className="w-px h-1 bg-[#333]" />
      </div>
      <div className="flex-1 bg-[#d9dfde] flex items-center gap-4 pl-[7px]">
        <QuickButton icon="folders" label="文件夹浏览器" />
        <QuickButton icon="favorites" label="收藏夹" />
      </div>
    </div>
    <div className="h-[29px] pt-0.5 shrink-0 flex items-center">
      <div className="w-[3px] h-3 bg-[#8a8c8e] rounded-r-sm" />
      <div className="ml-[7px] h-3.5 border-l-2 border-dotted border-[#a5a9aa]" />
      <button type="button" aria-label="列表" className="ml-5">
        <Icon name="listTree" />
      </button>
      <button type="button" aria-label="节点" className="ml-2">
        <Icon name="nodeTree" />
      </button>
      <button type="button" aria-label="更多" className="ml-6">
        <svg viewBox="0 0 8 7" className="w-2 h-[7px]" aria-hidden="true">
          <path d="M.5 .5l3 3-3 3M4.500 .5l3 3-3 3" fill="none" stroke="#333" strokeWidth="1.200" />
        </svg>
      </button>
      <button type="button" aria-label="设置" className="ml-2.5 flex items-end">
        <Icon name="docSettings" />
        <svg viewBox="0 0 3 3" className="w-[3px] h-[3px] -mr-1" aria-hidden="true">
          <path d="M3 0v3H0z" fill="#333" />
        </svg>
      </button>
    </div>
    <div className="h-[35px] shrink-0 flex items-center">
      <svg viewBox="0 0 10 12" className="w-2.5 h-3 -mt-3 shrink-0" aria-hidden="true">
        <path d="M-4 1h9L0 7" fill="none" stroke="#777" strokeWidth="1.500" />
      </svg>
      <div className="w-[81px] h-[29px] flex items-center border border-[#a3afb0] bg-white">
        <input type="text" aria-label="筛选" className="min-w-0 flex-1 h-full px-1 text-[12px] outline-none" />
        <button type="button" aria-label="清除" className="pr-[5px]">
          <svg viewBox="0 0 8 8" className="w-2 h-2" aria-hidden="true">
            <path d="M.5 .5l7 7M7.500 .5l-7 7" stroke="#9b9ea0" strokeWidth="1.400" />
          </svg>
        </button>
      </div>
      <button type="button" aria-label="筛选选项" className="ml-1.5">
        <Caret />
      </button>
      <button type="button" aria-label="添加" className="ml-3">
        <svg viewBox="0 0 11 11" className="w-[11px] h-[11px]" aria-hidden="true">
          <path d="M5.500 0v11M0 5.500h11" stroke="#9b9ea0" strokeWidth="3" />
        </svg>
      </button>
    </div>
    <div className="h-[23px] shrink-0 mt-0.5 mr-[5px] flex bg-[#f9fafa] border-b border-[#c4c9ca] text-[12px] text-[#333]">
      <div className="w-[116px] shrink-0 border-r border-[#c9cdce]" />
      <div className="flex-1 min-w-0 overflow-hidden pl-[5px] pt-0.5 leading-5">DEF</div>
    </div>
    <div className="flex-1 min-h-0 flex mr-[5px] overflow-hidden">
      <ModelTree />
      <div className="ml-auto w-[15px] flex flex-col bg-[#dfe1e2]">
        <button type="button" aria-label="向上滚动" className="h-[15px] flex items-center justify-center border border-[#c9cccd] bg-[#f6f7f7]">
          <svg viewBox="0 0 7 4" className="w-[7px] h-1 fill-[#999]" aria-hidden="true">
            <path d="M0 4h7L3.500 0z" />
          </svg>
        </button>
        <div className="basis-[422px] shrink border border-[#b3b6b7] bg-[#f8f8f9]" />
        <button type="button" aria-label="向下滚动" className="mt-auto h-[15px] shrink-0 flex items-center justify-center border border-[#c9cccd] bg-[#f6f7f7]">
          <svg viewBox="0 0 7 4" className="w-[7px] h-1 fill-[#999]" aria-hidden="true">
            <path d="M0 0h7L3.500 4z" />
          </svg>
        </button>
      </div>
    </div>
    <div className="h-[15px] shrink-0 mb-[3px] w-[119px] flex bg-[#dfe1e2]">
      <div className="ml-px w-[94px] border border-[#b3b6b7] bg-[#f8f8f9]" />
      <button type="button" aria-label="向右滚动" className="ml-auto w-[18px] flex items-center justify-between pl-[5px] border border-r-0 border-[#c9cccd] bg-[#f6f7f7]">
        <svg viewBox="0 0 4 7" className="w-1 h-[7px] fill-[#8b8e90]" aria-hidden="true">
          <path d="M0 0v7l4-3.500z" />
        </svg>
        <svg viewBox="0 0 3 5" className="w-[3px] h-[5px] fill-[#77797b]" aria-hidden="true">
          <path d="M1.500 0L3 2.500 1.500 5 0 2.500z" />
        </svg>
      </button>
    </div>
  </aside>
);

const VIEW_TOOLS: { icon: string; label: string; on?: boolean; eye?: boolean; menu?: boolean }[] = [
  { icon: 'zoomFit', label: '重新调整' },
  { icon: 'zoomIn', label: '放大' },
  { icon: 'zoomOut', label: '缩小' },
  { icon: 'repaint', label: '重画' },
  { icon: 'render', label: '渲染选项', menu: true },
  { icon: 'shaded', label: '显示样式', menu: true },
  { icon: 'views', label: '已保存方向', menu: true },
  { icon: 'snapshot', label: '视图管理器' },
  { icon: 'boxLeft', label: '视图法向' },
  { icon: 'boxDown', label: '定向' },
  { icon: 'perspective', label: '透视图' },
  { icon: 'section', label: '截面', on: true },
  { icon: 'hidden', label: '隐藏', menu: true },
  { icon: 'datumFilter', label: '基准显示过滤器', menu: true },
  { icon: 'plane', label: '平面显示', eye: true },
  { icon: 'axis', label: '轴显示', on: true, eye: true },
  { icon: 'points', label: '点显示', eye: true },
  { icon: 'csys', label: '坐标系显示', eye: true },
  { icon: 'note', label: '注释显示', on: true, eye: true },
  { icon: 'relations', label: '旋转中心' },
  { icon: 'simulate', label: '仿真' },
  { icon: 'pause', label: '暂停' },
  { icon: 'stop', label: '停止' },
];

const ViewToolbar = () => (
  <div className="absolute left-[456px] top-[7px] h-8 flex items-center px-0.5 bg-[#f8f9fc] border border-[#9b9fa1]">
    {VIEW_TOOLS.map((tool) => (
      <button key={tool.label} type="button" aria-label={tool.label} className="relative w-[26px] h-[30px] flex items-center justify-center">
        <span className={`w-6 h-6 flex items-center justify-center border ${tool.on ? 'bg-[#dfe0e3] border-[#adb1b3]' : 'border-transparent'}`}>
          <Icon name={tool.icon} eye={tool.eye} />
        </span>
        {tool.menu && (
          <svg viewBox="0 0 3 3" className="absolute right-px bottom-1.5 w-[3px] h-[3px]" aria-hidden="true">
            <path d="M3 0v3H0z" fill="#333" />
          </svg>
        )}
      </button>
    ))}
  </div>
);

const CX = 493.5;
const CY = 437;
const TEETH = 60;
const INNER = 0.807;

// tooth flank: distance from the centre (1 = tip) and half angle in degrees
const FLANK = [
  [0.908, 2.3],
  [0.932, 2.12],
  [0.956, 1.76],
  [0.974, 1.4],
  [0.992, 0.95],
  [1, 0.7],
];

// maps a point of the flat gear on to the tilted view plane
const project = (r: number, deg: number) => {
  const t = (deg * Math.PI) / 180;
  const x = CX + 294.5 * r * Math.cos(t);
  const y = CY - r * (22.5 * Math.cos(t) + 280 * Math.sin(t));
  return `${x.toFixed(1)} ${y.toFixed(1)}`;
};

const gearPath = () => {
  const step = 360 / TEETH;
  const pts: string[] = [];
  for (let k = 1; k <= TEETH; k++) {
    const mid = 90 + k * step;
    FLANK.forEach(([r, half]) => pts.push(project(r, mid - half)));
    [...FLANK].reverse().forEach(([r, half]) => pts.push(project(r, mid + half)));
  }
  // back along the bore, leaving the slit open between the last and first tooth
  for (let a = 452.3; a > 93.7; a -= 1.5) pts.push(project(INNER, a));
  pts.push(project(INNER, 93.7));
  return `M${pts.join('L')}Z`;
};

const GEAR = gearPath();

const Watermark = () => (
  <div className="absolute right-5 bottom-1 flex flex-col">
    <div className="flex gap-0.5 text-[40px] leading-[48px] italic font-light font-['Noto_Sans_CJK_SC',sans-serif]">
      <span className="text-[#fd6633]">野</span>
      <span className="relative text-[#fd6633]">
        火
        <svg viewBox="0 0 20 42" className="absolute left-[23px] -top-3 w-5 h-[42px]" aria-hidden="true">
          <path d="M5 0Q20 12 17 25 14 36 6 42L1 40Q9 30 7 22 6 13 1 9q7 4 9 13Q14 12 5 0z" fill="#fd6633" />
        </svg>
      </span>
      <span className="text-black">论</span>
      <span className="text-black">坛</span>
    </div>
    <span className="text-[18px] leading-5 italic text-[#8f9193] font-['Liberation_Sans',sans-serif]">www.proewildfire.cn</span>
  </div>
);

const Viewport = () => (
  <main className="relative flex-1 min-w-0 overflow-hidden bg-[#e8eaee]">
    <svg className="absolute inset-0 w-full h-full" shapeRendering="crispEdges" aria-hidden="true">
      <path d={GEAR} fill="#8690d0" />
      <path d="M468 391l4 6M475 403l8 14M486 423l4 6M492 435l4 6" stroke="#7b5058" fill="none" />
    </svg>
    <ViewToolbar />
    <span className="absolute left-2 top-[678px] text-[7px] leading-3 text-[#5f6377]">插入模式</span>
    <Watermark />
  </main>
);

const App = () => (
  <div className="h-screen flex flex-col overflow-hidden bg-[#e8eaee] font-['Noto_Sans','Noto_Sans_CJK_SC',sans-serif]">
    <TitleBar />
    <TabBar />
    <Ribbon />
    <QuickBar />
    <div className="flex-1 min-h-0 flex">
      <Sidebar />
      <Viewport />
    </div>
  </div>
);

export default App;
